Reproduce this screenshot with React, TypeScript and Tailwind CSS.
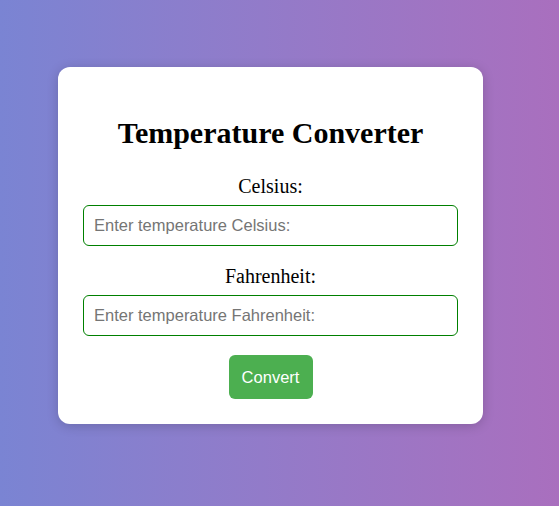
import React, { useState } from 'react';

export default function App() {
  const [celsius, setCelsius] = useState('');
  const [fahrenheit, setFahrenheit] = useState('');

  const convert = () => {
    if (celsius !== '') {
      setFahrenheit(((parseFloat(celsius) * 9) / 5 + 32).toFixed(2));
    } else if (fahrenheit !== '') {
      setCelsius((((parseFloat(fahrenheit) - 32) * 5) / 9).toFixed(2));
    }
  };

  return (
    <div className="min-h-screen w-full bg-gradient-to-r from-[#7a84d3] to-[#a96fbe] pt-[67px] font-['Liberation_Serif',serif]">
      <div className="ml-[58px] w-[425px] rounded-xl bg-white px-[25px] pt-[49px] pb-[25px] text-center shadow-[0_2px_12px_rgba(0,0,0,0.18)]">
        <h1 className="text-[30px] font-bold leading-[34px] text-black">Temperature Converter</h1>
        <label htmlFor="celsius" className="mt-[25px] block text-[20px] leading-[23px] text-black">
          Celsius:
        </label>
        <input
          id="celsius"
          type="number"
          value={celsius}
          onChange={(e) => setCelsius(e.target.value)}
          placeholder="Enter temperature Celsius:"
          className="mt-[7px] block h-[41px] w-full rounded-md border border-[#008000] px-[10px] font-['Liberation_Sans',Arial,sans-serif] text-[16.5px] text-black placeholder:text-[#757575] focus:outline-none"
        />
        <label htmlFor="fahrenheit" className="mt-[19px] block text-[20px] leading-[23px] text-black">
          Fahrenheit:
        </label>
        <input
          id="fahrenheit"
          type="number"
          value={fahrenheit}
          onChange={(e) => setFahrenheit(e.target.value)}
          placeholder="Enter temperature Fahrenheit:"
          className="mt-[7px] block h-[41px] w-full rounded-md border border-[#008000] px-[10px] font-['Liberation_Sans',Arial,sans-serif] text-[16.5px] text-black placeholder:text-[#757575] focus:outline-none"
        />
        <button
          onClick={convert}
          className="mt-[19px] h-[44px] w-[84px] rounded-md bg-[#4caf50] font-['Liberation_Sans',Arial,sans-serif] text-[16.5px] text-white"
        >
          Convert
        </button>
      </div>
    </div>
  );
}
